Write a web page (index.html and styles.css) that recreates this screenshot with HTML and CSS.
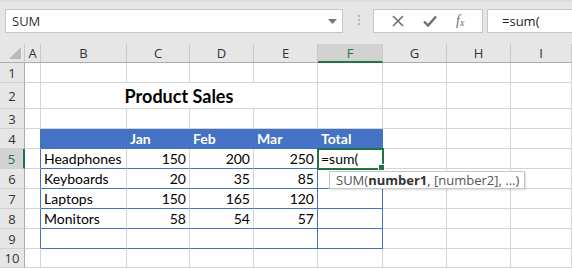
FILE: index.html
```html
<!DOCTYPE html>
<html lang="en">
<head>
  <meta charset="UTF-8">
  <title>Product Sales</title>
  <link rel="stylesheet" href="styles.css">
</head>
<body>
<div class="toolbar">
  <div class="name-box">
    <span>SUM</span>
    <svg class="caret" width="9" height="5" viewBox="0 0 9 5"><path d="M0 0h9L4.5 5z" fill="#777"/></svg>
  </div>
  <div class="grip"><i></i><i></i><i></i></div>
  <div class="buttons">
    <svg width="12" height="12" viewBox="0 0 12 12"><path d="M1 1l10 10M11 1L1 11" stroke="#6e6e6e" stroke-width="1.6"/></svg>
    <svg width="14" height="12" viewBox="0 0 14 12"><path d="M1 6.5l4 4L13 1.5" stroke="#6e6e6e" stroke-width="2.4" fill="none"/></svg>
    <span class="fx">f<sub>x</sub></span>
  </div>
  <div class="formula">=sum(</div>
</div>

<div class="sheet">
  <!-- column headers -->
  <div class="h corner"><span class="tri"></span></div>
  <div class="h">A</div>
  <div class="h">B</div>
  <div class="h">C</div>
  <div class="h">D</div>
  <div class="h">E</div>
  <div class="h active-col">F</div>
  <div class="h">G</div>
  <div class="h">H</div>
  <div class="h">I</div>

  <!-- 1 -->
  <div class="h rh">1</div>
  <div class="c"></div><div class="c"></div><div class="c"></div><div class="c"></div>
  <div class="c"></div><div class="c"></div><div class="c"></div><div class="c"></div><div class="c"></div>

  <!-- 2 -->
  <div class="h rh">2</div>
  <div class="c"></div>
  <div class="c title">Product Sales</div>
  <div class="c"></div><div class="c"></div><div class="c"></div><div class="c"></div>

  <!-- 3 -->
  <div class="h rh">3</div>
  <div class="c"></div><div class="c"></div><div class="c"></div><div class="c"></div>
  <div class="c"></div><div class="c"></div><div class="c"></div><div class="c"></div><div class="c"></div>

  <!-- 4 -->
  <div class="h rh">4</div>
  <div class="c br"></div>
  <div class="c th"></div>
  <div class="c th">Jan</div>
  <div class="c th">Feb</div>
  <div class="c th">Mar</div>
  <div class="c th">Total</div>
  <div class="c"></div><div class="c"></div><div class="c"></div>

  <!-- 5 -->
  <div class="h rh active-row">5</div>
  <div class="c br"></div>
  <div class="c bb txt">Headphones</div>
  <div class="c bb num">150</div>
  <div class="c bb num">200</div>
  <div class="c bb br num">250</div>
  <div class="c bb br txt selected">=sum(</div>
  <div class="c"></div><div class="c"></div><div class="c"></div>

  <!-- 6 -->
  <div class="h rh">6</div>
  <div class="c br"></div>
  <div class="c bb txt">Keyboards</div>
  <div class="c bb num">20</div>
  <div class="c bb num">35</div>
  <div class="c bb br num">85</div>
  <div class="c bb br"></div>
  <div class="c"></div><div class="c"></div><div class="c"></div>

  <!-- 7 -->
  <div class="h rh">7</div>
  <div class="c br"></div>
  <div class="c bb txt">Laptops</div>
  <div class="c bb num">150</div>
  <div class="c bb num">165</div>
  <div class="c bb br num">120</div>
  <div class="c bb br"></div>
  <div class="c"></div><div class="c"></div><div class="c"></div>

  <!-- 8 -->
  <div class="h rh">8</div>
  <div class="c br"></div>
  <div class="c bb txt">Monitors</div>
  <div class="c bb num">58</div>
  <div class="c bb num">54</div>
  <div class="c bb br num">57</div>
  <div class="c bb br"></div>
  <div class="c"></div><div class="c"></div><div class="c"></div>

  <!-- 9 -->
  <div class="h rh">9</div>
  <div class="c br"></div>
  <div class="c bb"></div>
  <div class="c bb"></div>
  <div class="c bb"></div>
  <div class="c bb br"></div>
  <div class="c bb br"></div>
  <div class="c"></div><div class="c"></div><div class="c"></div>

  <!-- 10 -->
  <div class="h rh">10</div>
  <div class="c"></div><div class="c"></div><div class="c"></div><div class="c"></div>
  <div class="c"></div><div class="c"></div><div class="c"></div><div class="c"></div><div class="c"></div>

  <div class="tip">SUM(<b>number1</b>, [number2], ...)</div>
</div>
</body>
</html>
```

FILE: styles.css
```css
body {
  margin: 0;
  background: #fff;
  font-family: "Open Sans", "Noto Sans", sans-serif;
  overflow: hidden;
}

.toolbar {
  display: flex;
  align-items: flex-start;
  height: 44px;
  padding: 7px 0 0 5px;
  box-sizing: border-box;
  background: #e6e6e6;
  border-top: 2px solid #dcdcdc;
}

.name-box {
  display: flex;
  align-items: center;
  justify-content: space-between;
  width: 338px;
  height: 24px;
  box-sizing: border-box;
  padding: 0 5px 0 6px;
  background: #fff;
  border: 1px solid #c6c6c6;
  font-size: 13px;
  color: #333;
}

.grip {
  display: flex;
  flex-direction: column;
  gap: 2px;
  margin: 6px 13px 0 15px;
}
.grip i {
  width: 2px;
  height: 2px;
  background: #b5b5b5;
}

.buttons {
  display: flex;
  align-items: center;
  justify-content: space-around;
  width: 110px;
  height: 24px;
  box-sizing: border-box;
  padding: 0 8px;
  background: #fff;
  border: 1px solid #c6c6c6;
}

.fx {
  font-family: "Liberation Serif", serif;
  font-style: italic;
  font-size: 14px;
  color: #6e6e6e;
}
.fx sub {
  font-size: 10px;
  vertical-align: -1px;
}

.formula {
  flex: 1;
  height: 24px;
  box-sizing: border-box;
  margin-left: 4px;
  padding: 2px 0 0 14px;
  background: #fff;
  border: 1px solid #c6c6c6;
  border-right: none;
  font-size: 13px;
  color: #222;
}

.sheet {
  position: relative;
  display: grid;
  grid-template-columns: 25px 16px 86px 63px 64px 64px 65px 64px 64px 61px;
  grid-template-rows: 19px 20px 26px 20px 20px 20px 20px 20px 20px 20px;
  font-family: "Lato", "Liberation Sans", sans-serif;
  font-size: 14px;
  color: #000;
}

.c {
  display: flex;
  align-items: flex-end;
  padding-bottom: 1px;
  box-sizing: border-box;
  border-right: 1px solid #d4d4d4;
  border-bottom: 1px solid #d4d4d4;
  white-space: nowrap;
}

.h {
  display: flex;
  align-items: center;
  justify-content: center;
  box-sizing: border-box;
  background: #e6e6e6;
  border-right: 1px solid #c8c8c8;
  border-bottom: 1px solid #ababab;
  font-family: "Open Sans", "Noto Sans", sans-serif;
  font-size: 13px;
  color: #333;
}

.rh {
  border-bottom-color: #d0d0d0;
  border-right-color: #ababab;
}

.corner {
  position: relative;
  justify-content: flex-end;
  align-items: flex-end;
  padding: 0 3px 3px 0;
}
.tri {
  width: 0;
  height: 0;
  border-left: 12px solid transparent;
  border-bottom: 12px solid #b9b9b9;
}

.active-col {
  background: #d2d2d2;
  border-bottom: 2px solid #217346;
  color: #217346;
}

.active-row {
  background: #d2d2d2;
  border-right: 2px solid #217346;
  color: #217346;
}

.title {
  grid-column: 3 / 7;
  justify-content: center;
  align-items: center;
  padding-bottom: 0;
  font-weight: bold;
  font-size: 18px;
}

.th {
  background: #4472c4;
  border-color: #4472c4;
  color: #fff;
  font-weight: bold;
  padding-left: 3px;
}

.txt {
  padding-left: 3px;
}

.num {
  justify-content: flex-end;
  padding-right: 3px;
}

.bb {
  border-bottom-color: #4472c4;
}
.br {
  border-right-color: #4472c4;
}

.selected {
  position: relative;
  outline: 2px solid #217346;
  outline-offset: -1px;
  z-index: 1;
}
.selected::after {
  content: "";
  position: absolute;
  right: -3px;
  bottom: -3px;
  width: 5px;
  height: 5px;
  background: #217346;
  border: 1px solid #fff;
}

.tip {
  position: absolute;
  left: 329px;
  top: 127px;
  z-index: 2;
  height: 18px;
  box-sizing: border-box;
  padding: 0 5px 0 6px;
  background: #fff;
  border: 1px solid #c6c6c6;
  box-shadow: 1px 1px 2px rgba(0, 0, 0, 0.15);
  font-family: "Open Sans", "Noto Sans", sans-serif;
  font-size: 13px;
  line-height: 16px;
  color: #555;
  white-space: nowrap;
}
.tip b {
  color: #333;
}
```
